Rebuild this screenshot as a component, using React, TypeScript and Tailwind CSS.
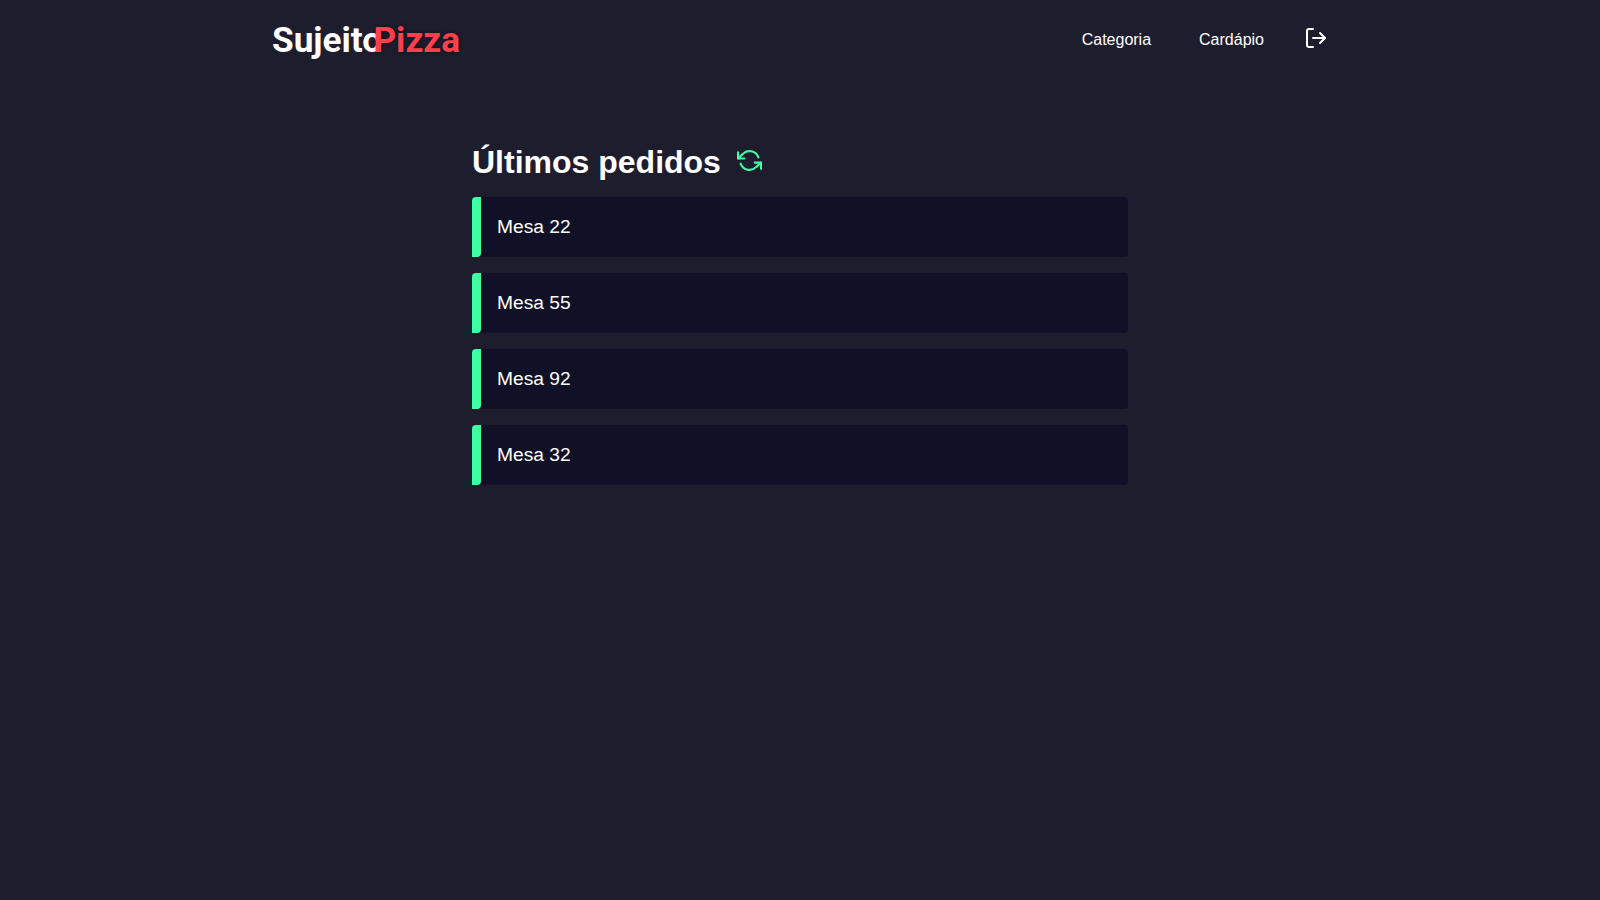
import { FiLogOut, FiRefreshCcw } from "react-icons/fi";

const tables = [22, 55, 92, 32];

export default function App() {
  return (
    <div className="min-h-screen bg-[#1d1d2e] font-['Liberation_Sans',Arial,sans-serif] text-white">
      <header className="h-20">
        <div className="mx-auto flex h-20 max-w-[1120px] items-center justify-between px-8">
          <svg width="190" height="60" viewBox="0 0 190 60" className="font-[Roboto,sans-serif] text-[35.2px] font-bold">
            <text x="0" y="42" fill="#ffffff">Sujeito</text>
            <text
              x="101.4"
              y="42"
              fill="#ff3f4b"
              className="[text-shadow:1px_0_4px_rgba(0,0,0,0.5)]"
            >
              Pizza
            </text>
          </svg>
          <nav className="flex items-center">
            <a className="px-6">Categoria</a>
            <a className="px-6">Cardápio</a>
            <button className="mb-1 ml-4">
              <FiLogOut size={24} />
            </button>
          </nav>
        </div>
      </header>
      <main className="mx-auto mt-16 flex max-w-[720px] flex-col px-8">
        <div className="flex items-center">
          <h1 className="text-[32px] leading-[37px] font-bold">Últimos pedidos</h1>
          <button className="mb-1 ml-4">
            <FiRefreshCcw size={25} color="#3fffa3" />
          </button>
        </div>
        <article className="my-4 flex flex-col gap-4">
          {tables.map((n) => (
            <section key={n} className="flex h-[60px] items-center rounded-t rounded-br bg-[#101026] text-[19.2px] leading-[22px]">
              <div className="mr-4 h-[60px] w-[9px] rounded-tl rounded-br bg-[#3fffa3]" />
              <span>Mesa {n}</span>
            </section>
          ))}
        </article>
      </main>
    </div>
  );
}
